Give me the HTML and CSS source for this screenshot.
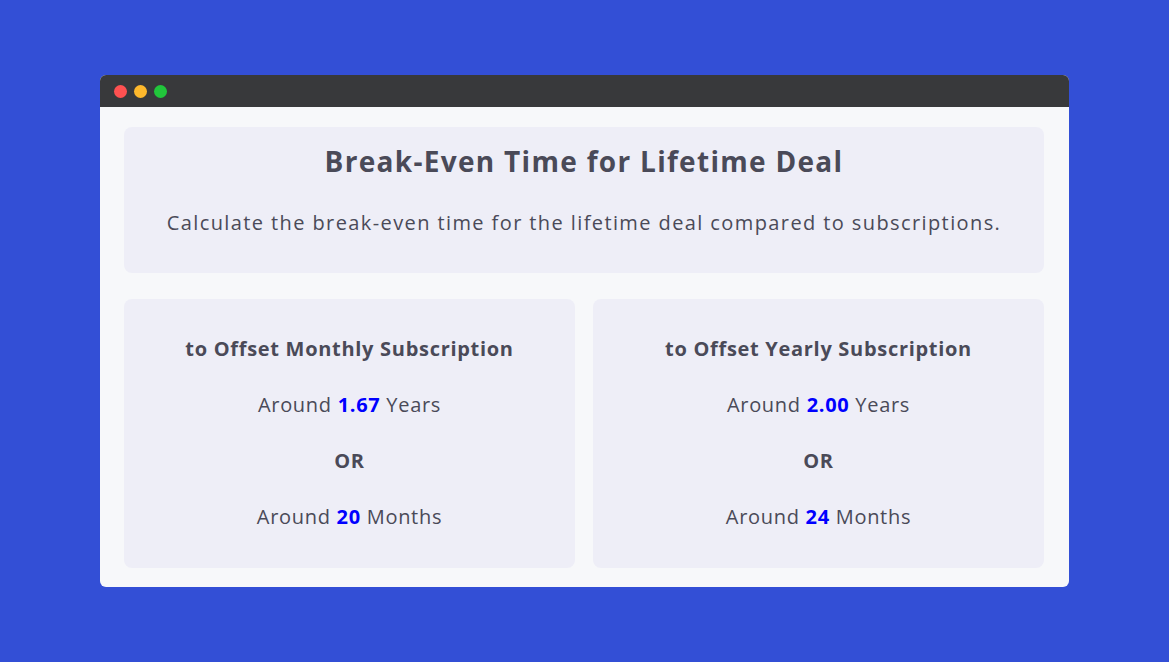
FILE: index.html
```html
<!DOCTYPE html>
<html lang="en">
<head>
    <meta charset="UTF-8">
    <meta name="viewport" content="width=device-width, initial-scale=1.0">
    <title>Break-Even Time for Lifetime Deal</title>
    <link rel="stylesheet" href="styles.css">
</head>
<body>
    <div class="window">
        <!-- Title bar -->
        <div class="titlebar">
            <span class="dot dot-red"></span>
            <span class="dot dot-yellow"></span>
            <span class="dot dot-green"></span>
        </div>

        <div class="content">
            <div class="header-card">
                <h1>Break-Even Time for Lifetime Deal</h1>
                <p class="subtitle">Calculate the break-even time for the lifetime deal compared to subscriptions.</p>
            </div>

            <div class="results">
                <div class="result-card">
                    <p class="result-title">to Offset Monthly Subscription</p>
                    <p>Around <span class="num">1.67</span> Years</p>
                    <p class="or">OR</p>
                    <p>Around <span class="num">20</span> Months</p>
                </div>
                <div class="result-card">
                    <p class="result-title">to Offset Yearly Subscription</p>
                    <p>Around <span class="num">2.00</span> Years</p>
                    <p class="or">OR</p>
                    <p>Around <span class="num">24</span> Months</p>
                </div>
            </div>
        </div>
    </div>
</body>
</html>
```

FILE: styles.css
```css
body {
    font-family: "Open Sans", sans-serif;
    background-color: #334fd6;
    color: #4a4a58;
    margin: 0;
    padding: 75px 0 0;
}

.window {
    width: 969px;
    margin: 0 auto;
    background: #f7f8fa;
    border-radius: 6px;
    overflow: hidden;
}

.titlebar {
    height: 32px;
    background: #38393b;
    display: flex;
    align-items: center;
    gap: 7px;
    padding-left: 14px;
}

.dot {
    width: 13px;
    height: 13px;
    border-radius: 50%;
}

.dot-red {
    background: #fe5151;
}

.dot-yellow {
    background: #fdb82c;
}

.dot-green {
    background: #21c63b;
}

.content {
    padding: 20px 25px 19px 24px;
}

.header-card {
    background: #eeeef7;
    border-radius: 8px;
    padding: 19px 20px 35px;
    text-align: center;
}

h1 {
    font-size: 28px;
    line-height: 30px;
    font-weight: 700;
    letter-spacing: 1.3px;
    margin: 0 0 32px;
}

.subtitle {
    font-size: 20px;
    line-height: 30px;
    letter-spacing: 1.4px;
    margin: 0;
}

.results {
    display: flex;
    gap: 18px;
    margin-top: 26px;
}

.result-card {
    flex: 1;
    background: #eeeef7;
    border-radius: 8px;
    padding: 35px 20px 36px;
    text-align: center;
    display: flex;
    flex-direction: column;
    gap: 26px;
}

.result-card p {
    font-size: 20px;
    line-height: 30px;
    letter-spacing: 0.7px;
    margin: 0;
}

.result-card .result-title,
.result-card .or {
    font-weight: 700;
}

.num {
    color: #0000ff;
    font-weight: 700;
}
```
